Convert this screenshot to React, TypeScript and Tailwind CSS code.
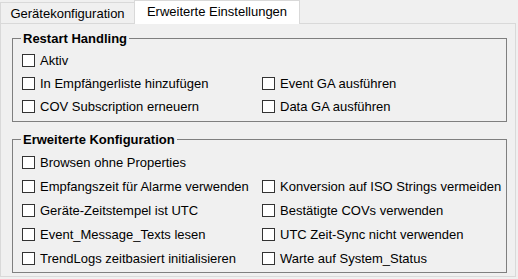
import React from "react";

function Check({ label }: { label: string }) {
  return (
    <div className="flex items-center gap-[5px] h-full whitespace-nowrap">
      <div className="w-[13px] h-[13px] border border-[#333333] bg-white shrink-0" />
      <span>{label}</span>
    </div>
  );
}

function Group({
  title,
  rows,
  rowH,
  pt,
  pb,
  className,
}: {
  title: string;
  rows: [string | null, string | null][];
  rowH: string;
  pt: string;
  pb: string;
  className?: string;
}) {
  return (
    <fieldset className={`border border-[#7f7f7f] pl-[8px] ${pb} ${className ?? ""}`}>
      <legend className="px-[2px] font-bold leading-[15px]">{title}</legend>
      <div className={`grid grid-cols-[240px_1fr] pl-[1px] ${pt}`}>
        {rows.map((r, i) => (
          <React.Fragment key={i}>
            <div className={rowH}>{r[0] ? <Check label={r[0]} /> : null}</div>
            <div className={rowH}>{r[1] ? <Check label={r[1]} /> : null}</div>
          </React.Fragment>
        ))}
      </div>
    </fieldset>
  );
}

export default function App() {
  return (
    <div className="w-[518px] h-[279px] bg-[#f0f0f0] text-[13px] leading-[15px] text-black overflow-hidden font-['Liberation_Sans',Arial,sans-serif]">
      <div className="flex items-end h-[23px]">
        <div className="h-[21px] w-[134px] border-t border-l border-[#d9d9d9] bg-[#f0f0f0] flex items-center justify-center">
          Gerätekonfiguration
        </div>
        <div className="h-[24px] w-[166px] -mb-px relative z-10 bg-white border border-b-0 border-[#d9d9d9] flex items-center justify-center pb-[2px]">
          Erweiterte Einstellungen
        </div>
      </div>
      <div className="w-[516px] h-[254px] border border-[#d9d9d9] bg-[#f0f0f0] pl-[11px] pt-[7px] w-[516px]">
        <div className="w-[495px]">
          <Group
            title="Restart Handling"
            rowH="h-[23px]"
            pt="pt-[3px]"
            pb="pb-[3px]"
            rows={[
              ["Aktiv", null],
              ["In Empfängerliste hinzufügen", "Event GA ausführen"],
              ["COV Subscription erneuern", "Data GA ausführen"],
            ]}
          />
          <Group
            title="Erweiterte Konfiguration"
            rowH="h-[24px]"
            pt="pt-[3px]"
            pb="pb-[2px]"
            className="mt-[10px]"
            rows={[
              ["Browsen ohne Properties", null],
              ["Empfangszeit für Alarme verwenden", "Konversion auf ISO Strings vermeiden"],
              ["Geräte-Zeitstempel ist UTC", "Bestätigte COVs verwenden"],
              ["Event_Message_Texts lesen", "UTC Zeit-Sync nicht verwenden"],
              ["TrendLogs zeitbasiert initialisieren", "Warte auf System_Status"],
            ]}
          />
        </div>
      </div>
    </div>
  );
}
